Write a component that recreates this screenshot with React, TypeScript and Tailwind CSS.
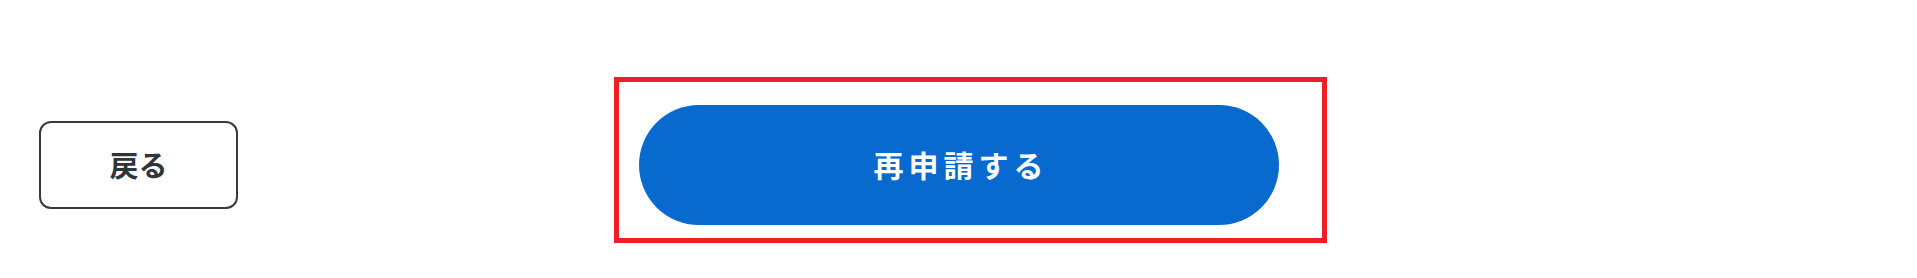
const FONT = { fontFamily: '"Noto Sans CJK JP", "Noto Sans", sans-serif' }

export default function App() {
  return (
    <div className="h-[278px] w-full bg-white pt-[105px]" style={FONT}>
      <div className="grid grid-cols-[1fr_auto_1fr] items-center">
        <div className="pl-[39px]">
          <button
            type="button"
            className="flex h-[88px] w-[199px] items-center justify-center rounded-[12px] border-2 border-[#353b41] bg-white text-[29px] leading-none font-bold text-[#2f353b]"
          >
            <span className="-mt-[2px]">戻る</span>
          </button>
        </div>
        <div className="relative">
          <button
            type="button"
            className="flex h-[120px] w-[640px] items-center justify-center rounded-full bg-[#0869cf] text-[30px] leading-none font-bold tracking-[5px] text-white"
          >
            <span className="-mt-[3px] pl-[5px]">再申請する</span>
          </button>
          <div className="pointer-events-none absolute -top-[28px] -left-[25px] -right-[48px] -bottom-[18px] border-[5px] border-[#ee1d27]" />
        </div>
        <div />
      </div>
    </div>
  )
}
